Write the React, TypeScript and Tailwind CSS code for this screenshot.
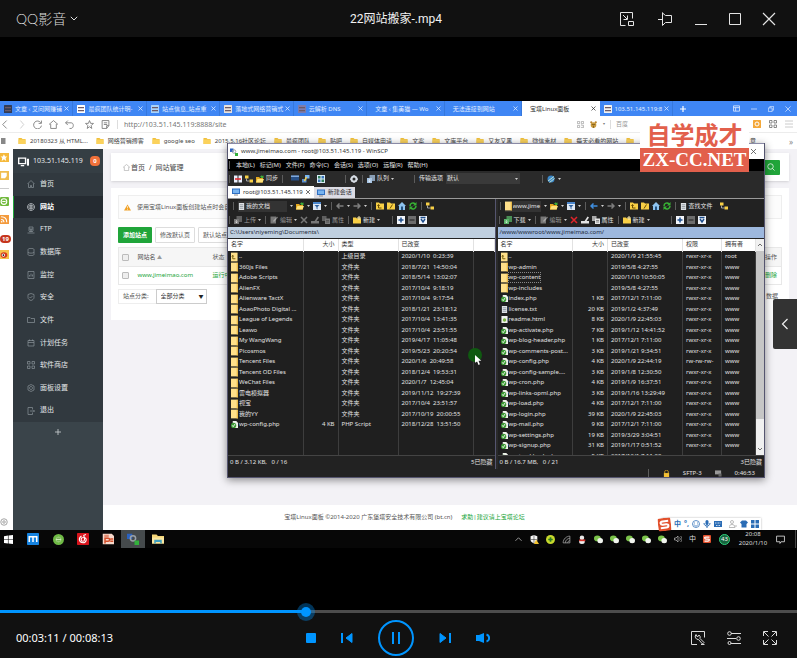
import React, { useState } from "react";

type P = { className?: string };

const Svg = ({ className = "size-2", box = 16, children }: P & { box?: number; children: React.ReactNode }) => (
  <svg viewBox={`0 0 ${box} ${box}`} className={`shrink-0 ${className}`} fill="none" aria-hidden="true">
    {children}
  </svg>
);

/* ---------- small desktop icons ---------- */
const Folder = (p: P) => (
  <Svg {...p}>
    <path d="M1 2h6l2 2h6v10H1z" fill="#f0bf3c" />
    <path d="M1 5h14v9H1z" fill="#fbd25c" />
  </Svg>
);
const FileFolder = () => (
  <Svg className="h-[10px] w-[7px]" box={16}>
    <path d="M-2 -2h17v20h-17z" fill="#ffe08a" />
    <path d="M13 -2h3v20h-3z" fill="#e8b94a" />
  </Svg>
);
const UpFolder = () => (
  <Svg className="h-[10px] w-[7px]">
    <path d="M0 -2h15v20H0z" fill="#ffe08a" />
    <path d="M4 12V5M2 7l2-3 2 3M4 12h6" stroke="#6a5200" strokeWidth="2" />
  </Svg>
);
const PhpFile = () => (
  <Svg className="size-[7px]">
    <path d="M4 0h8l4 4v12H4z" fill="#eef2ea" />
    <circle cx="6" cy="10" r="6" fill="#3c9a34" />
    <path d="M3 10l2 3 4-6" stroke="#fff" strokeWidth="2" />
  </Svg>
);
const TxtFile = () => (
  <Svg className="size-[7px]">
    <path d="M2 0h12v16H2z" fill="#dfe3e6" />
    <path d="M4 4h8M4 8h8M4 12h8" stroke="#8b949c" strokeWidth="2" />
  </Svg>
);
const HtmlFile = () => (
  <Svg className="size-[7px]">
    <path d="M1 0h14v16H1z" fill="#f0f3ee" />
    <circle cx="8" cy="9" r="4" fill="#7cb342" />
  </Svg>
);
const OpenFolder = () => (
  <Svg>
    <path d="M0 4h6l2 2h6v9H0z" fill="#e3a81f" />
    <path d="M3 8h13l-3 7H0z" fill="#ffe27a" />
    <path d="M8 4c1-3 4-4 6-2l1-2v6H9l2-2" fill="#3fae3a" />
  </Svg>
);
const Filter = () => (
  <Svg>
    <path d="M0 0h16v16H0z" fill="#dfe9f5" />
    <path d="M0 0h16v4H0z" fill="#4a86cc" />
    <path d="M3 6h10l-4 4v5l-2-2v-3z" fill="#2c5f9e" />
  </Svg>
);
const ArrowL = ({ color }: { color: string }) => (
  <Svg>
    <path d="M7 3L2 8l5 5M2 8h13" stroke={color} strokeWidth="3" />
  </Svg>
);
const ArrowR = ({ color }: { color: string }) => (
  <Svg>
    <path d="M9 3l5 5-5 5M14 8H1" stroke={color} strokeWidth="3" />
  </Svg>
);
const FolderUp = () => (
  <Svg>
    <path d="M0 1h6l2 2h8v12H0z" fill="#f8cf45" />
    <path d="M5 12V6M3 8l2-3 2 3M5 12h6" stroke="#6a4d00" strokeWidth="2" />
  </Svg>
);
const FolderRoot = () => (
  <Svg>
    <path d="M0 1h6l2 2h8v12H0z" fill="#f8cf45" />
    <path d="M6 13l5-8" stroke="#6a4d00" strokeWidth="2" />
  </Svg>
);
const Home = () => (
  <Svg>
    <path d="M8 0l8 8h-2v8H2V8H0z" fill="#8dc3ef" />
    <path d="M6 9h4v7H6z" fill="#22517f" />
  </Svg>
);
const Refresh = () => (
  <Svg>
    <path d="M2 8c0-6 7-8 10-4M14 8c0 6-7 8-10 4" stroke="#38b535" strokeWidth="3" />
    <path d="M15 0v7H8zM1 16V9h7z" fill="#38b535" />
  </Svg>
);
const Tree = () => (
  <Svg>
    <path d="M0 1h7v6H0zM9 9h7v6H9z" fill="#f8cf45" />
    <path d="M3 7v5h6" stroke="#c9c9c9" strokeWidth="1.5" />
  </Svg>
);
const Transfer = ({ color }: { color: string }) => (
  <Svg>
    <path d="M5 0h11v12H5z" fill={color} opacity=".75" />
    <path d="M0 6h10v10H0z" fill={color} />
    <path d="M5 8v6M3 11l2 3 2-3" stroke="#fff" strokeWidth="1.5" opacity=".6" />
  </Svg>
);
const EditDoc = ({ color }: { color: string }) => (
  <Svg>
    <path d="M1 1h11v14H1z" fill={color} />
    <path d="M6 10l8-9 2 2-8 9z" fill="#d8d8d8" opacity=".5" />
  </Svg>
);
const Cross = ({ color }: { color: string }) => (
  <Svg>
    <path d="M2 2l12 12M14 2L2 14" stroke={color} strokeWidth="3" />
  </Svg>
);
const Rename = ({ color }: { color: string }) => (
  <Svg>
    <path d="M0 10h16v5H0z" fill={color} />
    <path d="M6 12l7-11 3 2-7 10z" fill={color} />
  </Svg>
);
const Props = ({ color }: { color: string }) => (
  <Svg>
    <path d="M0 0h9v10H0z" fill={color} opacity=".7" />
    <path d="M6 5h10v11H6z" fill={color} />
    <path d="M8 9h6M8 12h6" stroke="#333" />
  </Svg>
);
const NewFolder = () => (
  <Svg>
    <path d="M0 3h6l2 2h8v10H0z" fill="#f8cf45" />
    <path d="M12 0v8M8 4h8" stroke="#ffefb0" strokeWidth="2" />
  </Svg>
);
const Box = ({ kind }: { kind: "plus" | "minus" | "check" }) => (
  <Svg>
    <path d="M0 0h16v16H0z" fill={kind === "minus" ? "#6d6d6d" : "#f2f5fa"} />
    {kind === "plus" && <path d="M8 3v10M3 8h10" stroke="#1e4e8c" strokeWidth="3" />}
    {kind === "minus" && <path d="M3 8h10" stroke="#3a3a3a" strokeWidth="3" />}
    {kind === "check" && <path d="M3 3h10M4 6l4 6 4-6" stroke="#1e4e8c" strokeWidth="3" />}
  </Svg>
);
const Monitor = () => (
  <Svg>
    <path d="M0 1h16v11H0z" fill="#2f6fc2" />
    <path d="M2 3h12v7H2z" fill="#78b4f0" />
    <path d="M4 13h8v2H4z" fill="#8a8a8a" />
  </Svg>
);
const WinScp = ({ className = "size-2" }: P) => (
  <Svg className={className}>
    <path d="M0 1h7v7H0z" fill="#2a62c0" />
    <circle cx="8" cy="7" r="3.500" stroke="#9aa1a8" strokeWidth="2" />
    <path d="M10 10h6v6h-6z" fill="#33b13c" />
  </Svg>
);
const Caret = () => (
  <svg viewBox="0 0 6 4" className="h-[2px] w-[3px] shrink-0" aria-hidden="true">
    <path d="M0 0h6L3 4z" fill="#cfcfcf" />
  </svg>
);
const Grip = () => <span className="mx-px h-2 w-px shrink-0 bg-[#5c5c5c]" />;

/* ---------- video title bar ---------- */
const ICON_BTN = "flex size-[14px] items-center justify-center text-[#e4e4e4]";

function TitleBar() {
  return (
    <header className="grid h-[37px] shrink-0 grid-cols-[1fr_auto_1fr] items-center bg-[#111] pr-[21px] pl-4">
      <button className="flex items-center gap-1 justify-self-start font-['Lato','Noto_Sans_CJK_SC',sans-serif] text-sm leading-5 font-light text-[#dedede]">
        QQ影音
        <svg viewBox="0 0 8 5" className="h-[5px] w-2" fill="none" aria-hidden="true">
          <path d="M.8.8L4 4 7.200.8" stroke="#dedede" />
        </svg>
      </button>
      <h1 className="font-['Roboto','Noto_Sans_CJK_SC',sans-serif] text-xs leading-5 text-[#f2f2f2]">22网站搬家-.mp4</h1>
      <div className="flex gap-5 justify-self-end">
        <button aria-label="迷你模式" className={`${ICON_BTN} mr-1`}>
          <Svg box={14} className="size-[14px]">
            <path d="M5.500 13.500H.5V.5h12v6M3 3l4 4M7.500 3.500v4h-4M8.500 9.500h5v4h-5z" stroke="currentColor" />
          </Svg>
        </button>
        <button aria-label="置顶" className={`${ICON_BTN} mr-[2px]`}>
          <Svg box={14} className="size-[14px]">
            <path d="M0 7.500h4M4.500.5v13M4.500 1l3 2.500h6v7h-6l-3 3" stroke="currentColor" />
          </Svg>
        </button>
        <button aria-label="最小化" className={ICON_BTN}>
          <Svg box={14} className="size-[14px]">
            <path d="M1 12.500h12" stroke="currentColor" />
          </Svg>
        </button>
        <button aria-label="最大化" className={ICON_BTN}>
          <Svg box={14} className="size-[14px]">
            <path d="M1.500 1.500h11v11h-11z" stroke="currentColor" />
          </Svg>
        </button>
        <button aria-label="关闭" className={ICON_BTN}>
          <Svg box={14} className="size-[14px]">
            <path d="M1 1l12 12M13 1L1 13" stroke="currentColor" strokeWidth="1.200" />
          </Svg>
        </button>
      </div>
    </header>
  );
}

/* ---------- browser chrome ---------- */
const TABS: { title: string; icon?: string; active?: boolean }[] = [
  { title: "文章 ‹ 艾问网赚铺", icon: "#333c55" },
  { title: "最疯团队统计明-", icon: "#ffffff" },
  { title: "站点信息_站点重", icon: "#a9d3fb" },
  { title: "落地式网络营销式", icon: "#e9e2dc" },
  { title: "云解析 DNS", icon: "#7c7cae" },
  { title: "文章 ‹ 集美猫 — Wo" },
  { title: "无法连接到网站" },
  { title: "宝塔Linux面板", active: true },
  { title: "103.51.145.119:8", icon: "#f2f2f2" },
];

function BrowserTabs() {
  return (
    <div className="flex h-[15px] bg-[#3f86f4] text-[6px] leading-[8px] text-[#e3eeff]">
      <div role="tablist" className="flex min-w-0 flex-1">
        {TABS.map((t) => (
          <div
            key={t.title}
            role="tab"
            aria-selected={!!t.active}
            className={`flex min-w-0 flex-1 items-center gap-[3px] border-r pr-[3px] ${t.icon ? "pl-1" : "pl-2"} ${
              t.active ? "border-white bg-white text-[#333]" : "border-[#3678dd]"
            }`}
          >
            {t.icon && (
              <Svg className="size-2">
                <rect width="16" height="16" rx="1" fill={t.icon} />
                <path d="M2 5h12M2 11h12" stroke="#6d5a66" strokeWidth="2.500" />
              </Svg>
            )}
            <span className="min-w-0 flex-1 whitespace-nowrap">{t.title}</span>
            <button aria-label="关闭标签页" className="shrink-0">
              <Svg className="size-[5px]" box={10}>
                <path d="M1 1l8 8M9 1L1 9" stroke="currentColor" strokeWidth="1.500" />
              </Svg>
            </button>
          </div>
        ))}
      </div>
      <div className="flex w-[124px] shrink-0 items-center pr-[6px] pl-[7px]">
        <button aria-label="新标签页">
          <Svg className="size-[6px]" box={10}>
            <path d="M5 0v10M0 5h10" stroke="#fff" strokeWidth="2" />
          </Svg>
        </button>
        <div className="ml-auto flex items-center gap-[11px]">
          <Svg className="size-[7px]">
            <path d="M1 2h14v12H1zM1 6h14M6 6v8" stroke="#d7e6ff" strokeWidth="2" />
          </Svg>
          <Svg className="size-[6px]">
            <path d="M0 8h16" stroke="#d7e6ff" strokeWidth="2" />
          </Svg>
          <Svg className="size-[6px]">
            <path d="M1 5h10v10H1zM5 5V1h10v10h-4" stroke="#d7e6ff" strokeWidth="2" />
          </Svg>
          <Svg className="size-[6px]">
            <path d="M1 1l14 14M15 1L1 15" stroke="#d7e6ff" strokeWidth="2" />
          </Svg>
        </div>
      </div>
    </div>
  );
}

function AddressBar() {
  return (
    <div className="flex h-[17px] items-center border-b border-[#ececec] bg-white pr-1 pl-px text-[7px] text-[#777]">
      <div className="flex items-center gap-[7px]">
        <Svg className="size-[9px]"><path d="M10 1L3 8l7 7" stroke="#777" strokeWidth="1.500" /></Svg>
        <Svg className="size-[9px]"><path d="M6 1l6 7-6 7" stroke="#c8c8c8" strokeWidth="1.500" /></Svg>
        <Svg className="size-[9px]"><path d="M14 5a7 7 0 1 0 1 5M15 1v5h-5" stroke="#777" strokeWidth="1.500" /></Svg>
        <Svg className="size-[9px]"><path d="M0 8l8-7 8 7M3 7v8h10V7" stroke="#777" strokeWidth="1.500" /></Svg>
        <Svg className="size-[9px]"><path d="M5 1L1 5l4 4M1 5h10c5 0 5 9 0 10H8" stroke="#777" strokeWidth="1.500" /></Svg>
        <Svg className="ml-1 size-[9px]"><path d="M8 1l2 5h5l-4 4 1 5-4-3-4 3 1-5-4-4h5z" stroke="#777" strokeWidth="1.500" /></Svg>
        <Svg className="size-[9px]"><path d="M2 1h12v9l-4 5H2zM5 5h6M5 8h6M10 15v-5h4" stroke="#777" strokeWidth="1.500" /></Svg>
      </div>
      <span className="mr-[6px] ml-[7px] h-[9px] w-px bg-[#ddd]" />
      <input
        aria-label="地址"
        defaultValue="http://103.51.145.119:8888/site"
        className="h-[13px] min-w-0 flex-1 bg-transparent text-[7px] leading-[13px] text-[#777] outline-none"
      />
      <div className="flex w-[216px] items-center gap-[5px]">
        <Svg className="size-[7px]"><path d="M1 1h5v5H1zM10 1h5v5h-5zM1 10h5v5H1zM9 9h3v3M15 9v6H9" stroke="#999" strokeWidth="1.500" /></Svg>
        <Svg className="size-[9px]"><circle cx="4" cy="4" r="2" fill="#b9852e" /><circle cx="12" cy="4" r="2" fill="#b9852e" /><circle cx="8" cy="9" r="5" fill="#c99a3c" /><path d="M5 8h6M8 10v4" stroke="#5b4012" /></Svg>
        <span className="text-[4px]">▾</span>
        <span className="h-[9px] w-px bg-[#ddd]" />
        <input aria-label="搜索" placeholder="百度" className="w-5 bg-transparent text-[6px] outline-none placeholder:text-[#999]" />
        <div className="ml-auto flex items-center gap-2">
          <Svg className="size-2"><rect width="16" height="16" rx="1" fill="#f4a83a" /><circle cx="8" cy="8" r="4" stroke="#fff" strokeWidth="2" /></Svg>
          <Svg className="size-2"><path d="M1 1h5v5H1zM10 1h5v5h-5zM1 10h5v5H1zM10 10h5v5h-5z" stroke="#666" strokeWidth="1.500" /></Svg>
          <Svg className="size-2"><path d="M0 2h16M0 8h16M0 14h16" stroke="#bbb" strokeWidth="1.500" /></Svg>
        </div>
      </div>
    </div>
  );
}

const BOOKMARKS = ["20180323 从 HTML...", "网络营销搏客", "google seo", "2015.5.16社区论坛", "最疯团队", "贴吧", "自媒体申请", "文案", "文库平台", "又友又黑", "微信素材", "每天必看的网站", ""];

function Bookmarks() {
  return (
    <div className="flex h-4 items-center bg-white pr-1 text-[6px] leading-[9px] text-[#444]">
      <Svg className="mr-[10px] h-[6px] w-2"><path d="M0 0h12v16H0z" fill="#888" /></Svg>
      <nav aria-label="书签" className="flex min-w-0 flex-1 gap-2 overflow-hidden">
        {BOOKMARKS.map((b) => (
          <a key={b} href="#" className="flex shrink-0 items-center gap-1 whitespace-nowrap">
            <Folder className="size-2" />
            {b}
          </a>
        ))}
      </nav>
      <span className="flex w-[43px] items-center justify-between">意<span className="text-[8px] text-[#888]">»</span></span>
    </div>
  );
}

/* ---------- panel page ---------- */
const MENU: { label: string; d: string; on?: boolean }[] = [
  { label: "首页", d: "M1 8l7-7 7 7M3 7v8h4v-4h2v4h4V7" },
  { label: "网站", d: "M8 1a7 7 0 1 0 .1 0M1 8h14M8 1v14M3 4c3 2 7 2 10 0M3 12c3-2 7-2 10 0", on: true },
  { label: "FTP", d: "M4 2h8v4H4zM2 8h12M8 6v6M1 14h14M4 11h8" },
  { label: "数据库", d: "M2 3c0-3 12-3 12 0v10c0 3-12 3-12 0zM2 8c0 3 12 3 12 0" },
  { label: "监控", d: "M2 1h12v14H2zM5 11V8M8 11V5M11 11V7" },
  { label: "安全", d: "M8 1l6 2v6c0 3-3 5-6 6-3-1-6-3-6-6V3zM5 8l2 2 4-4" },
  { label: "文件", d: "M1 3h5l2 2h7v8H1z" },
  { label: "计划任务", d: "M2 3h12v11H2zM2 7h12M5 1v3M11 1v3" },
  { label: "软件商店", d: "M1 1h5v5H1zM10 1h5v5h-5zM1 10h5v5H1zM10 10h5v5h-5z" },
  { label: "面板设置", d: "M8 1l6 3v8l-6 3-6-3V4zM8 5a3 3 0 1 0 .1 0" },
  { label: "退出", d: "M11 5V1H2v14h9v-4M6 8h9M13 6l2 2-2 2" },
];

function Sidebar() {
  return (
    <aside className="flex w-[90px] shrink-0 flex-col bg-[#3a444a] text-[7px] text-[#e4e7e9]">
      <div className="flex h-6 items-center gap-1 bg-[#353e44] pl-[5px]">
        <Svg className="size-[11px]">
          <path d="M1 3h10v8H1zM4 14h5" stroke="#fff" strokeWidth="2" />
          <path d="M13 4h3v10h-3z" fill="#fff" />
        </Svg>
        <span>103.51.145.119</span>
        <span className="mr-[3px] ml-auto flex size-[10px] items-center justify-center rounded-[4px] bg-[#f0713a] text-[6px] leading-[8px] font-bold text-white">0</span>
      </div>
      <nav className="grid h-[249px] auto-rows-fr bg-[#31393f]">
        {MENU.map((m) => (
          <a
            key={m.label}
            href="#"
            className={`flex items-center gap-[5px] border-l pl-[13px] ${m.on ? "border-[#20a53a] bg-[#252b31] font-bold text-white" : "border-transparent"}`}
          >
            <Svg className="size-2">
              <path d={m.d} stroke={m.on ? "#c7ccd0" : "#8b949a"} strokeWidth="1.400" />
            </Svg>
            {m.label}
          </a>
        ))}
      </nav>
      <button aria-label="添加" className="mt-[7px] flex h-[6px] justify-center">
        <Svg className="size-[6px]" box={6}><path d="M3 0v6M0 3h6" stroke="#cfd4d7" strokeWidth=".8" /></Svg>
      </button>
    </aside>
  );
}

function ToolStrip() {
  return (
    <div className="flex w-[13px] shrink-0 flex-col items-start bg-white pt-1 pb-1">
      <Svg className="size-[9px]"><path d="M0 0h16v16H0z" fill="#f5b93c" /><path d="M7 2l2 4h4l-3 3 1 5-4-3-4 3 1-5-3-3h4z" fill="#fff" /></Svg>
      <Svg className="mt-[9px] size-[9px]"><path d="M0 0h16v16H0z" fill="#f0bd50" /><path d="M2 3h10v6l-3 4H2z" fill="#fff" /></Svg>
      <span className="mt-2 h-px w-[9px] bg-[#ccc]" />
      <Svg className="mt-2 size-[9px]"><rect width="16" height="16" rx="2" fill="#71b93c" /><circle cx="7" cy="8" r="5" stroke="#fff" strokeWidth="2" /><path d="M4 8h6" stroke="#fff" strokeWidth="2" /></Svg>
      <Svg className="mt-[9px] size-[9px]"><path d="M0 0h16v16H0z" fill="#f39a3c" /><path d="M2 3c6 0 10 4 10 10M2 8c3 0 5 2 5 5" stroke="#fff" strokeWidth="2" /><circle cx="3" cy="12" r="1.500" fill="#fff" /></Svg>
      <span className="mt-[11px] flex h-2 w-[11px] items-center justify-center rounded-full bg-[#c5351d] text-[6px] leading-[8px] font-bold text-white">19</span>
      <Svg className="mt-[7px] size-[9px]"><path d="M0 0h16v16H0z" fill="#f6c14a" /><ellipse cx="7" cy="9" rx="6" ry="5" fill="#d33a20" /><circle cx="6" cy="9" r="3" fill="#fff" /><circle cx="6" cy="9" r="1.500" fill="#111" /></Svg>
      <Svg className="mt-auto size-2"><circle cx="8" cy="8" r="6.500" stroke="#888" strokeWidth="1.500" /><circle cx="8" cy="8" r="2.500" stroke="#888" strokeWidth="1.500" /></Svg>
    </div>
  );
}

function PanelPage() {
  return (
    <main className="flex min-w-0 flex-1 flex-col bg-[#f3f2f6] text-[6px] leading-[9px] text-[#555]">
      <div className="flex flex-1 flex-col gap-[7px] pt-1 pr-2 pl-2">
        <section className="flex h-7 items-center justify-between bg-white pr-[9px] pl-3 text-[7px] shadow-sm">
          <span className="flex items-center gap-px text-[#444]">
            <Svg className="size-[7px]"><path d="M0 8l8-7 8 7M3 7v8h10V7" stroke="#aaa" strokeWidth="1.500" /></Svg>
            首页<span className="mx-[3px]">/</span>网站管理
          </span>
          <button aria-label="搜索" className="flex h-[15px] w-6 items-center justify-end rounded-[1px] bg-[#20a53a] pr-[5px]">
            <Svg className="size-2"><circle cx="7" cy="7" r="5.500" stroke="#fff" strokeWidth="1.500" /><path d="M11 11l4 4" stroke="#fff" strokeWidth="1.500" /></Svg>
          </button>
        </section>
        <section className="bg-white px-[7px] pt-[7px] pb-4">
          <p className="flex h-6 items-center gap-[6px] border border-[#eee] bg-[#fcfcfc] pl-[5px]">
            <Svg className="size-[7px]"><path d="M8 1l8 14H0z" fill="#f0a024" /><path d="M8 5v5M8 12v2" stroke="#fff" strokeWidth="1.500" /></Svg>
            使用宝塔Linux面板创建站点时会自
          </p>
          <div className="mt-2 flex gap-[3px]">
            <button className="h-4 rounded-[1px] bg-[#20a53a] px-[5px] font-bold text-white">添加站点</button>
            <button className="h-4 rounded-[1px] border border-[#ddd] px-1">修改默认页</button>
            <button className="h-4 rounded-[1px] border border-[#ddd] px-1">默认站点</button>
          </div>
          <table className="mt-1 w-full border border-[#e8e8e8] text-left">
            <thead>
              <tr className="h-[19px] border-b border-[#e8e8e8] bg-[#f6f6f6]">
                <th className="w-[19px] pl-[3px]"><input type="checkbox" aria-label="全选" className="block size-[7px] appearance-none rounded-[1px] border border-[#bbb] bg-[#eee]" /></th>
                <th className="w-[75px] font-normal">网站名 <span className="text-[5px] text-[#999]">▲</span></th>
                <th className="font-normal">状态</th>
                <th className="pr-1 text-right font-normal">操作</th>
              </tr>
            </thead>
            <tbody>
              <tr className="h-[18px] text-[#20a53a]">
                <td className="pl-[3px]"><input type="checkbox" aria-label="www.jimeimao.com" className="block size-[7px] appearance-none rounded-[1px] border border-[#bbb] bg-[#eee]" /></td>
                <td><a href="#">www.jimeimao.com</a></td>
                <td>运行中</td>
                <td className="pr-1 text-right"><a href="#">删除</a></td>
              </tr>
            </tbody>
          </table>
          <div className="mt-1 flex items-center">
            <label htmlFor="cat" className="h-[15px] border border-r-0 border-[#eee] pr-[7px] pl-1 leading-[13px]">站点分类:</label>
            <span className="relative">
              <select id="cat" className="block h-[15px] w-[51px] appearance-none border border-[#ccc] bg-white pl-1 text-[6px] leading-[9px] text-[#333]">
                <option>全部分类</option>
              </select>
              <span className="pointer-events-none absolute top-[3px] right-[3px] text-[5px] text-[#222]">▼</span>
            </span>
            <span className="mr-1 ml-auto">数据</span>
          </div>
        </section>
      </div>
      <footer className="flex h-[25px] items-center justify-center gap-[9px] bg-white pr-[91px]">
        <span>宝塔Linux面板 ©2014-2020 广东堡塔安全技术有限公司 (bt.cn)</span>
        <a href="#" className="text-[#20a53a]">求助|建议请上宝塔论坛</a>
      </footer>
    </main>
  );
}

/* ---------- WinSCP window ---------- */
type Row = { name: string; size?: string; kind?: string; date: string; perm?: string; owner?: string; icon: "up" | "dir" | "php" | "txt" | "html"; focus?: boolean };

const dir = (name: string, date: string): Row => ({ name, kind: "文件夹", date, icon: "dir" });
const LOCAL: Row[] = [
  { name: "..", kind: "上级目录", date: "2020/1/10  0:23:39", icon: "up" },
  dir("360js Files", "2018/7/21  14:50:04"),
  dir("Adobe Scripts", "2018/5/14  13:02:07"),
  dir("AlienFX", "2017/10/4  9:18:19"),
  dir("Alienware TactX", "2017/10/4  9:17:54"),
  dir("AoaoPhoto Digital ...", "2018/1/21  23:18:12"),
  dir("League of Legends", "2017/10/4  13:41:35"),
  dir("Leawo", "2017/10/4  23:51:55"),
  dir("My WangWang", "2019/4/17  11:05:48"),
  dir("Picosmos", "2019/5/23  20:20:54"),
  dir("Tencent Files", "2020/1/6  20:49:58"),
  dir("Tencent OD Files", "2018/12/4  19:53:31"),
  dir("WeChat Files", "2020/1/7  12:45:04"),
  dir("雷电模拟器", "2019/11/12  19:27:39"),
  dir("视宝", "2017/10/4  23:51:57"),
  dir("我的YY", "2017/10/19  20:00:55"),
  { name: "wp-config.php", size: "4 KB", kind: "PHP Script", date: "2018/12/28  13:51:50", icon: "php" },
];

const rem = (name: string, size: string, date: string, icon: Row["icon"] = "php", perm = "rwxr-xr-x"): Row => ({ name, size, date, icon, perm, owner: "www" });
const REMOTE: Row[] = [
  { ...rem("..", "", "2020/1/9 21:55:45", "up"), owner: "root" },
  rem("wp-admin", "", "2019/5/8 4:27:55", "dir"),
  { ...rem("wp-content", "", "2020/1/10 10:50:05", "dir"), focus: true },
  rem("wp-includes", "", "2019/5/8 4:27:55", "dir"),
  rem("index.php", "1 KB", "2017/12/1 7:11:00"),
  rem("license.txt", "20 KB", "2019/1/2 4:37:49", "txt"),
  rem("readme.html", "8 KB", "2020/1/9 22:45:03", "html"),
  rem("wp-activate.php", "7 KB", "2019/1/12 14:41:52"),
  rem("wp-blog-header.php", "1 KB", "2017/12/1 7:11:00"),
  rem("wp-comments-post...", "3 KB", "2019/1/21 9:34:51"),
  rem("wp-config.php", "4 KB", "2020/1/9 22:44:19", "php", "rw-rw-rw-"),
  rem("wp-config-sample....", "3 KB", "2019/1/8 12:30:50"),
  rem("wp-cron.php", "4 KB", "2019/1/9 16:37:51"),
  rem("wp-links-opml.php", "3 KB", "2019/1/16 13:29:49"),
  rem("wp-load.php", "4 KB", "2017/12/1 7:11:00"),
  rem("wp-login.php", "39 KB", "2020/1/9 22:45:03"),
  rem("wp-mail.php", "9 KB", "2017/12/1 7:11:00"),
  rem("wp-settings.php", "19 KB", "2019/3/29 3:04:51"),
  rem("wp-signup.php", "31 KB", "2019/1/17 0:51:52"),
  rem("wp-trackback.php", "5 KB", "2017/12/1 7:11:00"),
];

const FILE_ICON = { up: <UpFolder />, dir: <FileFolder />, php: <PhpFile />, txt: <TxtFile />, html: <HtmlFile /> };

function FileTable({ rows, remote }: { rows: Row[]; remote?: boolean }) {
  const heads = remote ? ["名字", "大小", "已改变", "权限", "拥有者"] : ["名字", "大小", "类型", "已改变", ""];
  const td = "overflow-hidden border-r border-[#3d3d3d] px-[3px] py-0 whitespace-pre";
  return (
    <table className="h-full w-full table-fixed text-left text-[6px] leading-[9px] text-[#e2e2e2]">
      <colgroup>
        <col className="w-[75px]" />
        <col className="w-[35px]" />
        <col className={remote ? "w-[75px]" : "w-[60px]"} />
        <col className={remote ? "w-[39px]" : "w-[75px]"} />
        <col />
      </colgroup>
      <thead>
        <tr className="h-3 border-b border-[#202020] bg-white text-[#333]">
          {heads.map((h, i) => (
            <th key={i} className={`border-r border-[#e2e2e2] px-[3px] py-0 font-normal ${i === 1 ? "text-right" : ""}`}>{h}</th>
          ))}
        </tr>
      </thead>
      <tbody>
        {rows.map((r, i) => (
          <tr key={i} className="odd:h-[11px] even:h-[10px]">
            <td className={td}>
              <span className="flex items-center gap-px">
                {FILE_ICON[r.icon]}
                <span className={r.focus ? "outline-[1px] outline-dotted outline-[#888]" : ""}>{r.name}</span>
              </span>
            </td>
            <td className={`${td} text-right`}>{r.size}</td>
            {remote ? (
              <>
                <td className={td}>{r.date}</td>
                <td className={td}>{r.perm}</td>
                <td className={td}>{r.owner}</td>
              </>
            ) : (
              <>
                <td className={td}>{r.kind}</td>
                <td className={td}>{r.date}</td>
                <td className="p-0" />
              </>
            )}
          </tr>
        ))}
        {!remote && (
          <tr>
            <td className={td} /><td className={td} /><td className={td} /><td className={td} /><td />
          </tr>
        )}
      </tbody>
    </table>
  );
}

const TBTN = "flex shrink-0 items-center gap-[2px]";

function PanelTools({ remote }: { remote?: boolean }) {
  const dim = remote ? "#e3e3e3" : "#777";
  return (
    <div className="bg-[#222] text-[6px] leading-[9px] text-[#e2e2e2]">
      <div className={`flex h-[14px] items-center gap-[3px] ${remote ? "pl-px" : "pl-1"}`}>
        <Grip />
        <span className={`flex h-[11px] items-center gap-px bg-[#333] ${remote ? "w-9" : "w-[49px]"}`}>
          {remote ? <FileFolder /> : <TxtFile />}
          <select aria-label="位置" className="min-w-0 flex-1 appearance-none bg-transparent text-[6px] leading-[9px]">
            <option>{remote ? "www.jime" : "我的文档"}</option>
          </select>
        </span>
        <Caret /><OpenFolder /><Caret /><Filter /><Caret /><Grip />
        <ArrowL color={remote ? "#3f8fe0" : "#7d7d7d"} /><Caret /><ArrowR color="#7d7d7d" /><Caret /><Grip />
        <FolderUp /><FolderRoot /><Home /><Refresh /><Grip />
        {remote && <button className={`${TBTN} mr-1`}><TxtFile />查找文件</button>}
        <Tree />
      </div>
      <div className="flex h-[14px] items-center gap-[3px]">
        <Grip />
        <button className={`${TBTN} ${remote ? "" : "text-[#999]"}`}><Transfer color={remote ? "#58b368" : "#777"} />{remote ? "下载" : "上传"}<Caret /></button>
        <Grip />
        <button className={`${TBTN} text-[#999]`}><EditDoc color="#777" />编辑<Caret /></button>
        <Cross color={remote ? "#e0242a" : "#777"} />
        <Rename color={dim} />
        <button className={`${TBTN} ${remote ? "" : "text-[#999]"}`}><Props color={dim} />属性</button>
        <Grip />
        <button className={TBTN}><NewFolder />新建<Caret /></button>
        <span className={remote ? "w-[14px]" : "w-[5px]"} />
        <Grip />
        <Box kind="plus" /><Box kind="minus" /><Box kind="check" />
      </div>
    </div>
  );
}

function FilePanel({ remote, path, status, hidden }: { remote?: boolean; path: string; status: string; hidden: string }) {
  return (
    <section className="flex min-w-0 flex-1 flex-col">
      <PanelTools remote={remote} />
      <div className={`mb-px flex h-[11px] items-center px-[2px] text-[6px] leading-[9px] text-[#1f2b3a] ${remote ? "bg-[#9db8de]" : "bg-[#bfcfdf]"}`}>{path}</div>
      <div className="flex h-[216px] overflow-hidden bg-[#1f1f1f]">
        <div className="min-w-0 flex-1">
          <FileTable rows={remote ? REMOTE : LOCAL} remote={remote} />
        </div>
        {remote && (
          <div className="flex w-2 flex-col items-center justify-between bg-[#f0f0f0] py-1">
            <Svg className="size-1" box={8}><path d="M0 6l4-4 4 4" stroke="#444" strokeWidth="1.500" /></Svg>
            <span className="mt-1 mb-7 w-full flex-1 bg-[#c6c6c6]" />
            <Svg className="size-1" box={8}><path d="M0 2l4 4 4-4" stroke="#444" strokeWidth="1.500" /></Svg>
          </div>
        )}
      </div>
      <div className="flex h-[14px] items-center justify-between border-t border-[#444] bg-[#222] px-[2px] text-[6px] leading-[9px] text-[#e2e2e2]">
        <span className="whitespace-pre">{status}</span>
        <span>{hidden}</span>
      </div>
    </section>
  );
}

function WinScpWindow() {
  return (
    <div className="absolute top-[42px] left-[227px] w-[538px] border-x border-b border-[#55556f] bg-[#222] text-[6px] leading-[9px] text-[#e2e2e2] shadow-[0_2px_8px_rgba(0,0,0,0.45)]">
      <div className="flex h-4 items-center gap-[3px] border-t border-[#8a8aa6] bg-white pr-2 pl-[2px] text-[#333]">
        <WinScp />
        www.jimeimao.com - root@103.51.145.119 - WinSCP
        <button aria-label="关闭窗口" className="ml-auto">
          <Svg className="size-[5px]" box={10}><path d="M0 0l10 10M10 0L0 10" stroke="#444" strokeWidth="1.500" /></Svg>
        </button>
      </div>
      <div className="flex h-3 items-center gap-[5px] bg-black">
        <Grip />
        {["本地(L)", "标记(M)", "文件(F)", "命令(C)", "会话(S)", "选项(O)", "远程(R)", "帮助(H)"].map((m) => (
          <button key={m} className="shrink-0 leading-[9px]">{m}</button>
        ))}
      </div>
      <div className="flex h-[15px] items-center gap-[3px] bg-[#2a2a2a]">
        <Grip />
        <Svg><path d="M0 1h7v14H0zM9 1h7v14H9z" fill="#e8eefc" /><path d="M2 8h12" stroke="#e0242a" strokeWidth="3" /></Svg>
        <Tree />
        <button className={TBTN}><OpenFolder />同步</button>
        <Grip />
        <Svg className="ml-1 size-2"><path d="M0 1h16v10H0z" fill="#274f86" /><path d="M0 1h16v3H0z" fill="#7fa9dc" /></Svg>
        <Svg><path d="M6 0h9v7H6z" fill="#78b4f0" /><path d="M0 8h9v7H0z" fill="#5a8fd0" /><path d="M9 4l-4 8" stroke="#f8cf45" strokeWidth="3" /></Svg>
        <Svg className="ml-1 size-2"><path d="M0 0h16v16H0z" fill="#d9ecf6" /><path d="M2 2h5v5H2zM9 9h5v5H9z" fill="#2f7d5a" /><path d="M9 2h5v5H9zM2 9h5v5H2z" fill="#3b74ba" /></Svg>
        <span className="w-[13px]" />
        <Grip />
        <Svg><circle cx="8" cy="8" r="5" stroke="#d5dbe2" strokeWidth="4" /><path d="M8 0v3M8 13v3M0 8h3M13 8h3" stroke="#d5dbe2" strokeWidth="2.500" /></Svg>
        <Grip />
        <button className={TBTN}><Transfer color="#a9c6e4" />队列<Caret /></button>
        <span className="w-[13px]" />
        <Grip />
        <label htmlFor="xfer" className="shrink-0">传输选项</label>
        <span className="flex h-[11px] w-[74px] items-center bg-[#3a3a3a] pr-[2px]">
          <select id="xfer" className="min-w-0 flex-1 appearance-none bg-transparent pl-px text-[6px] leading-[9px]"><option>默认</option></select>
          <Caret />
        </span>
        <span className="w-[15px]" />
        <Grip />
        <Svg><circle cx="8" cy="8" r="7" fill="#3b87c8" /><path d="M2 12L14 3M5 15L15 7" stroke="#bfe0d0" strokeWidth="2" /></Svg>
        <Caret />
      </div>
      <div role="tablist" className="flex h-3 items-end bg-[#2a2a2a] text-[#333]">
        <button role="tab" aria-selected="true" className="flex h-3 items-center gap-[3px] bg-white px-1">
          <Monitor />root@103.51.145.119
          <Svg className="size-1" box={8}><path d="M0 0l8 8M8 0L0 8" stroke="#444" strokeWidth="1.500" /></Svg>
        </button>
        <button role="tab" aria-selected="false" className="flex h-[11px] items-center gap-[3px] bg-[#dcdce4] px-[3px]"><Monitor />新建会话</button>
      </div>
      <div className="flex border-t border-[#9a9a9a]">
        <FilePanel path="C:\Users\niyeming\Documents\" status="0 B / 3.12 KB,   0 / 16" hidden="5已隐藏" />
        <div className="w-[3px] border-l border-[#55556f] bg-[#2a2a2a]" />
        <FilePanel remote path="/www/wwwroot/www.jimeimao.com/" status="0 B / 16.7 MB,   0 / 21" hidden="3已隐藏" />
      </div>
      <div className="flex h-2 items-center justify-end gap-[13px] bg-[#222] pr-[9px] leading-[8px]">
        <Grip />
        <Svg className="size-[7px]"><path d="M4 8V4c0-5 8-5 8 0v4" stroke="#d9a520" strokeWidth="2" /><path d="M2 7h12v9H2z" fill="#f3c034" /></Svg>
        <span>SFTP-3</span>
        <Svg className="size-[7px]"><path d="M0 1h14v9H0z" fill="#999" /><path d="M8 8h7v7H8z" fill="#666" /></Svg>
        <span>0:46:53</span>
      </div>
    </div>
  );
}

/* ---------- Windows taskbar ---------- */
const WeChat = () => (
  <Svg className="size-[9px]"><ellipse cx="6" cy="6" rx="6" ry="5" fill="#7bc34a" /><ellipse cx="11" cy="10" rx="5" ry="4.500" fill="#f2f5ef" /></Svg>
);
const Sogou = ({ className = "size-2" }: P) => (
  <Svg className={className}><rect width="16" height="16" rx="2" fill="#e2502c" /><path d="M13 4H6c-4 0-3 4 0 4h4c4 0 3 4 0 4H3" stroke="#fff" strokeWidth="2.500" /></Svg>
);

function Taskbar() {
  const item = "flex h-[18px] w-[24px] items-center justify-center";
  return (
    <div className="flex h-[18px] items-center bg-[#070707] text-[6px] text-[#ddd]">
      <div className="flex items-center gap-px">
        <button aria-label="开始" className="flex w-[20px] pl-1"><Svg className="size-[9px]"><path d="M0 2l7-1v6H0zM8 1l8-1v7H8zM0 8h7v7l-7-1zM8 8h8v8l-8-1z" fill="#fff" /></Svg></button>
        <button aria-label="傲游" className={item}><Svg className="size-3"><rect width="16" height="16" rx="1" fill="#1683e0" /><path d="M3 12V5h10v7M8 5v7" stroke="#fff" strokeWidth="2" /></Svg></button>
        <button aria-label="360" className={item}><Svg className="size-[11px]"><circle cx="8" cy="8" r="8" fill="#6fba45" /><circle cx="8" cy="8" r="4" fill="#c9e8b4" /><path d="M5 6h6M5 10h6" stroke="#5ea138" strokeWidth="2" /></Svg></button>
        <button aria-label="网易云音乐" className={item}><Svg className="size-3"><rect width="16" height="16" rx="1" fill="#d8141c" /><path d="M6 4c-5 3-3 9 2 9s6-7 1-7-4 5-1 5 2-4 1-8l3-1" stroke="#fff" strokeWidth="1.400" /></Svg></button>
        <button aria-label="PowerPoint" className={item}><Svg className="size-3"><path d="M1 1h12l3 3v11H1z" fill="#f7d9cc" /><path d="M3 3h6M3 5h6" stroke="#d2502c" /><path d="M4 14V7h4c3 0 3 4 0 4H4M11 8h4M11 11h4" stroke="#d2502c" strokeWidth="2" /></Svg></button>
        <button aria-label="WinSCP" className={`${item} bg-[#454a4c]`}><WinScp className="size-3" /></button>
        <button aria-label="资源管理器" className={item}><Svg className="size-3"><path d="M0 2h6l2 2h8v10H0z" fill="#f4d577" /><path d="M0 6h16v8H0z" fill="#fbe6a0" /><path d="M3 9h10v5h-2v-2H5v2H3z" fill="#3f9fc0" /></Svg></button>
      </div>
      <div className="ml-auto flex items-center gap-[7px]">
        <Svg className="size-[7px]"><path d="M1 11l7-7 7 7" stroke="#ddd" strokeWidth="1.500" /></Svg>
        <Svg className="ml-px size-[9px]"><path d="M1 2l6-2 6 2v7c0 3-3 5-6 6-3-1-6-3-6-6z" fill="#f4f4f4" /><path d="M7 0v15M1 8h12" stroke="#333" /><path d="M11 8l5 8H7z" fill="#f4c430" /></Svg>
        <Svg className="size-[9px]"><circle cx="8" cy="8" r="8" fill="#c7d92c" /><path d="M8 4v8M4 8h8" stroke="#2c7a24" strokeWidth="3" /></Svg>
        <Svg className="size-[9px]"><path d="M2 14C2 7 8 2 14 2v12zM6 14c0-5 4-8 8-8M10 14c0-2 2-4 4-4" stroke="#999" strokeWidth="1.500" /></Svg>
        <Svg className="size-[9px]"><circle cx="7" cy="5" r="4" fill="#e8e8e8" /><ellipse cx="7" cy="12" rx="5" ry="4" fill="#eee" /><path d="M2 8h11v3H2z" fill="#d8322a" /></Svg>
        <WeChat /><WeChat /><WeChat /><WeChat /><WeChat />
        <Svg className="size-2"><path d="M1 6h3l4-4v12l-4-4H1zM11 5c2 2 2 4 0 6M13 2c4 4 4 8 0 12" stroke="#ccc" strokeWidth="1.300" /></Svg>
        <span className="text-[7px]">中</span>
        <Sogou />
        <span className="ml-px flex size-[11px] items-center justify-center rounded-full border border-[#2fd27d] bg-[#17643e] text-[6px] leading-[8px] text-white">43</span>
        <time className="flex w-8 flex-col text-center text-[6px] leading-[9px] whitespace-nowrap"><span>20:08</span><span>2020/1/10</span></time>
        <Svg className="size-[9px]"><path d="M1 2h14v10H9l-2 3v-3H1z" stroke="#ddd" strokeWidth="1.500" /></Svg>
        <span className="ml-[3px] h-[18px] w-[2px] border-l border-[#444]" />
      </div>
    </div>
  );
}

/* Input-method bar floating just above the tray */
function ImeBar() {
  return (
    <div className="absolute right-9 bottom-[18px] flex h-3 items-center gap-[3px] bg-white pr-[2px] text-[7px] text-[#2a6cb5] shadow-[0_0_2px_rgba(0,0,0,0.3)]">
      <Sogou className="-ml-1 size-[13px] -rotate-6" />
      <span className="font-bold">中</span>
      <span className="font-bold">°,</span>
      <Svg><circle cx="8" cy="8" r="7" stroke="#2a6cb5" strokeWidth="1.500" /><path d="M4 9c2 4 6 4 8 0M5 5v2M11 5v2" stroke="#2a6cb5" strokeWidth="1.500" /></Svg>
      <Svg><rect x="5" width="6" height="10" rx="3" fill="#2a6cb5" /><path d="M2 6c0 8 12 8 12 0M8 12v4" stroke="#2a6cb5" strokeWidth="2" /></Svg>
      <Svg><path d="M0 2h16v12H0z" fill="#2a6cb5" /><path d="M2 6h12M4 11h8" stroke="#fff" strokeWidth="1.500" strokeDasharray="2 1" /></Svg>
      <Svg className="ml-1 size-2"><circle cx="6" cy="4" r="3" stroke="#bbb" strokeWidth="2" /><path d="M0 15c0-8 12-8 12 0zM10 12h6" stroke="#bbb" strokeWidth="2" /></Svg>
      <Svg><path d="M4 1h8l4 4-3 3v7H3V8L0 5z" fill="#2a6cb5" /></Svg>
      <Svg><path d="M0 0h7v7H0zM9 0h7v7H9zM0 9h7v7H0zM9 9h7v7H9z" fill="#2a6cb5" /></Svg>
    </div>
  );
}

function Desktop() {
  return (
    <div className="relative overflow-hidden bg-white">
      <BrowserTabs />
      <AddressBar />
      <Bookmarks />
      <div className="flex h-[381px]">
        <ToolStrip />
        <Sidebar />
        <PanelPage />
      </div>
      <Taskbar />
      <ImeBar />
      <WinScpWindow />
      <div className="absolute top-[21px] left-[640px] w-[109px] text-center">
        <p className="bg-white text-[24px] leading-[26px] font-bold text-[#e2604c]">自学成才</p>
        <p className="bg-[#e2604c] font-['Liberation_Serif',serif] text-[19px] leading-6 font-bold text-white">ZX-CC.NET</p>
      </div>
      <span className="absolute top-[247px] left-[468px] size-[14px] rounded-full bg-[#0f5a10]" />
      <svg viewBox="0 0 10 14" className="absolute top-[254px] left-[475px] h-[10px] w-[7px]" aria-hidden="true">
        <path d="M0 0v11l3-2 2 5 2-1-2-5h4z" fill="#fff" />
      </svg>
    </div>
  );
}

/* ---------- player controls ---------- */
function Controls() {
  const [pos, setPos] = useState(382);
  const [playing, setPlaying] = useState(true);
  const pct = pos / 10;
  return (
    <div className="shrink-0 bg-[#111]">
      <input
        type="range"
        aria-label="播放进度"
        min={0}
        max={1000}
        value={pos}
        onChange={(e) => setPos(Number(e.target.value))}
        style={{ backgroundImage: `linear-gradient(to right, #0095ff ${pct}%, #4d4d4d ${pct}%)` }}
        className="relative block h-[3px] w-full appearance-none outline-none [&::-webkit-slider-thumb]:size-[10px] [&::-webkit-slider-thumb]:appearance-none [&::-webkit-slider-thumb]:rounded-full [&::-webkit-slider-thumb]:bg-[#0095ff] [&::-webkit-slider-thumb]:shadow-[0_0_0_4px_rgba(0,149,255,0.35)]"
      />
      <div className="grid h-[45px] grid-cols-[1fr_auto_1fr] items-center pt-[5px] pr-[18px] pl-4 text-[#0095ff]">
        <p className="text-[11px] leading-4 text-white">00:03:11 / 00:08:13</p>
        <div className="flex items-center gap-6">
          <button aria-label="停止" className="size-[10px] rounded-[1px] bg-[#0095ff]" />
          <button aria-label="上一个">
            <Svg box={14} className="size-[14px]"><path d="M1 2h2v10H1z" fill="currentColor" /><path d="M12 2.500v9L6 7z" fill="currentColor" stroke="currentColor" strokeLinejoin="round" /></Svg>
          </button>
          <button aria-label={playing ? "暂停" : "播放"} onClick={() => setPlaying(!playing)} className="flex size-9 items-center justify-center rounded-full border-2 border-[#0095ff]">
            <Svg box={14} className="size-[14px]">{playing ? <path d="M3 1h2v12H3zM9 1h2v12H9z" fill="currentColor" /> : <path d="M4 1l9 6-9 6z" fill="currentColor" />}</Svg>
          </button>
          <button aria-label="下一个">
            <Svg box={14} className="size-[14px]"><path d="M11 2h2v10h-2z" fill="currentColor" /><path d="M2 2.500v9L8 7z" fill="currentColor" stroke="currentColor" strokeLinejoin="round" /></Svg>
          </button>
          <button aria-label="音量">
            <Svg box={14} className="size-[14px]"><path d="M0 4h3l5-2v10l-5-2H0z" fill="currentColor" /><path d="M10.500 3.500c3.500 1 3.500 6 0 7" stroke="currentColor" strokeWidth="2" /></Svg>
          </button>
        </div>
        <div className="flex gap-[22px] justify-self-end pr-[2px] text-[#dcdcdc]">
          <button aria-label="工具">
            <Svg box={14} className="size-[14px]">
              <path d="M6 13.500H.5V.5h13v6M10 13.500h3.500" stroke="currentColor" />
              <path d="M5 3.500a3 3 0 0 0 2.500 5l4 4.500 1.500-1.500L9 7.500A3 3 0 0 0 8 4L6.500 6z" stroke="currentColor" strokeLinejoin="round" />
            </Svg>
          </button>
          <button aria-label="设置">
            <Svg box={14} className="size-[14px]">
              <path d="M4 2.500h10M0 7.500h9M4 12.500h10" stroke="currentColor" />
              <circle cx="2.500" cy="2.500" r="1.800" stroke="currentColor" />
              <circle cx="11.500" cy="7.500" r="1.800" stroke="currentColor" />
              <circle cx="2.500" cy="12" r="1.500" stroke="currentColor" />
            </Svg>
          </button>
          <button aria-label="全屏">
            <Svg box={14} className="size-[14px]">
              <path d="M.5 5V.5H5M9 .5h4.500V5M13.500 9v4.500H9M5 13.500H.5V9M1 1l4.500 4.500M13 1L8.500 5.500M13 13L8.500 8.500M1 13l4.500-4.500" stroke="currentColor" />
            </Svg>
          </button>
        </div>
      </div>
    </div>
  );
}

export default function App() {
  return (
    <div className="flex min-h-screen flex-col bg-black font-['Noto_Sans','Noto_Sans_CJK_SC',sans-serif]">
      <TitleBar />
      <div className="relative flex-1 pt-16 pb-[60px]">
        <Desktop />
        <button aria-label="展开播放列表" className="absolute top-1/2 right-0 flex h-[50px] w-6 -translate-y-1/2 items-center justify-center rounded-l-[2px] bg-[#333]">
          <Svg box={12} className="size-3"><path d="M8.500 1L3.500 6l5 5" stroke="#f0f0f0" strokeWidth="1.200" /></Svg>
        </button>
      </div>
      <Controls />
    </div>
  );
}
